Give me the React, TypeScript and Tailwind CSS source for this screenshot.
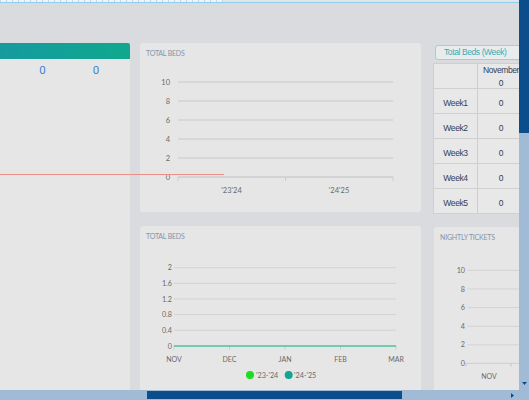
import React from "react";

const LABEL = "#6a6a6a";

function TopChart() {
  const grid = [39, 58, 77, 96, 115];
  const labels: [string, number][] = [["10", 39], ["8", 58], ["6", 77], ["4", 96], ["2", 115], ["0", 134]];
  return (
    <svg width={281} height={155} viewBox="0 14 281 155" className="block">
      {grid.map((y) => (
        <line key={y} x1={38} x2={253} y1={y} y2={y} stroke="#d2d2d2" strokeWidth={1.5} />
      ))}
      <line x1={38} x2={253} y1={134} y2={134} stroke="#cdcdcd" strokeWidth={1.5} />
      {[38, 145.5, 253].map((x) => (
        <line key={x} x1={x} x2={x} y1={134} y2={138} stroke="#cdcdcd" strokeWidth={1} />
      ))}
      {labels.map(([t, y]) => (
        <text key={t} x={30} y={y + 2.6} textAnchor="end" fontSize={7.5} fill={LABEL}>
          {t}
        </text>
      ))}
      <text x={91.5} y={150} textAnchor="middle" fontSize={7.5} fill={LABEL}>
        '23'24
      </text>
      <text x={199} y={150} textAnchor="middle" fontSize={7.5} fill={LABEL}>
        '24'25
      </text>
    </svg>
  );
}

function BottomChart() {
  const labels: [string, number][] = [["2", 41.7], ["1.6", 57.3], ["1.2", 73], ["0.8", 88.5], ["0.4", 104.2], ["0", 120]];
  const xs: [string, number][] = [["NOV", 34], ["DEC", 89.5], ["JAN", 145], ["FEB", 200.5], ["MAR", 256]];
  return (
    <svg width={281} height={156} viewBox="0 14 281 156" className="block">
      {labels.slice(0, 5).map(([t, y]) => (
        <line key={t} x1={34} x2={256} y1={y} y2={y} stroke="#d3d3d3" strokeWidth={1} />
      ))}
      {xs.map(([t, x]) => (
        <line key={t} x1={x} x2={x} y1={120} y2={124} stroke="#cdcdcd" strokeWidth={1} />
      ))}
      <line x1={34} x2={256} y1={120} y2={120} stroke="#47c2a2" strokeWidth={1.6} />
      {labels.map(([t, y]) => (
        <text key={t} x={32} y={y + 2.6} textAnchor="end" fontSize={7.2} fill={LABEL}>
          {t}
        </text>
      ))}
      {xs.map(([t, x]) => (
        <text key={t} x={x} y={135.5} textAnchor="middle" fontSize={7} fill={LABEL}>
          {t}
        </text>
      ))}
      <circle cx={110} cy={149} r={4} fill="#1edc1e" />
      <text x={116} y={151.6} fontSize={7.2} fill={LABEL}>
        '23-'24
      </text>
      <circle cx={148.7} cy={149} r={4} fill="#13a594" />
      <text x={154} y={151.6} fontSize={7.2} fill={LABEL}>
        '24-'25
      </text>
    </svg>
  );
}

function TicketsChart() {
  const labels: [string, number][] = [["10", 43.3], ["8", 62], ["6", 80.6], ["4", 99.3], ["2", 117.8], ["0", 136.3]];
  return (
    <svg width={100} height={156} viewBox="0 14 100 156" className="block">
      {labels.slice(0, 5).map(([t, y]) => (
        <line key={t} x1={33.5} x2={100} y1={y} y2={y} stroke="#d3d3d3" strokeWidth={1} />
      ))}
      <line x1={32} x2={100} y1={136.3} y2={136.3} stroke="#cdcdcd" strokeWidth={1} />
      {[32, 77].map((x) => (
        <line key={x} x1={x} x2={x} y1={136.3} y2={139.5} stroke="#c4c4c4" strokeWidth={1} />
      ))}
      {labels.map(([t, y]) => (
        <text key={t} x={31} y={y + 2.6} textAnchor="end" fontSize={7.2} fill={LABEL}>
          {t}
        </text>
      ))}
      <text x={55} y={151.5} textAnchor="middle" fontSize={7} fill={LABEL}>
        NOV
      </text>
    </svg>
  );
}

function Title({ children }: { children: React.ReactNode }) {
  return (
    <div className="h-[14px] pl-[6px] pt-[7px] text-[7px] leading-[7px] tracking-[-0.2px] text-[#8595a9] uppercase whitespace-nowrap">
      {children}
    </div>
  );
}

const weeks = ["Week1", "Week2", "Week3", "Week4", "Week5"];

export default function App() {
  return (
    <div className="w-[529px] h-[400px] flex flex-col bg-[#a1bbd7] overflow-hidden font-['Lato','Noto_Sans',sans-serif]">
      <div className="flex h-[390px] shrink-0">
        <div className="relative w-[519px] h-[390px] overflow-hidden bg-[#dadbde] shrink-0">
          <div className="flex h-[2px] bg-[#e0e5ea]">
            <div className="w-[223px] h-[2px] bg-[repeating-linear-gradient(90deg,#c8d5e0_0px,#c8d5e0_1px,#f1f4f7_1px,#f1f4f7_6px)]" />
          </div>
          <div className="h-px bg-[#8dcfee]" />

          <div className="flex items-start mt-[40px]">
            {/* left card */}
            <div className="w-[130px] h-[360px] shrink-0 bg-[#e6e6e6] rounded-tr-[2px]">
              <div className="h-[16px] bg-linear-to-r from-[#179a9f] to-[#0fa88d] rounded-tr-[2px]" />
              <div className="flex mt-[4px] text-[11.5px] leading-[14px] text-[#3f83d4] font-['Roboto',sans-serif]">
                <div className="w-[85px] text-center">0</div>
                <div className="w-[22px] text-center">0</div>
              </div>
            </div>

            {/* middle column */}
            <div className="ml-[10px] w-[281px] shrink-0 flex flex-col gap-[14px]">
              <div className="h-[169px] bg-[#e6e6e6] rounded-[3px]">
                <Title>Total Beds</Title>
                <TopChart />
              </div>
              <div className="h-[170px] bg-[#e6e6e6] rounded-[3px]">
                <Title>Total Beds</Title>
                <BottomChart />
              </div>
            </div>

            {/* right column */}
            <div className="ml-[12px] w-[100px] shrink-0 flex flex-col">
              <div className="ml-[2px] mt-[2px] h-[15px] w-[95px] border border-[#93d6d9] rounded-[3px] bg-[#e9ecec] pl-[8px] text-[8.5px] leading-[13px] tracking-[-0.4px] text-[#36adb5] whitespace-nowrap font-['Liberation_Sans',Arial,sans-serif]">
                Total Beds (Week)
              </div>
              <div className="mt-[3px] w-[92px] border-l border-t border-[#cfcfcf] bg-[#e8e8e8] text-[8.5px] tracking-[-0.4px] text-[#2f3e59] font-['Liberation_Sans',Arial,sans-serif]">
                <div className="flex h-[25px] border-b border-[#d0d0d0]">
                  <div className="w-[44px] border-r border-[#cdcdcd]" />
                  <div className="w-[47px] border-r border-[#cdcdcd] text-center leading-[13px]">
                    <div>November</div>
                    <div>0</div>
                  </div>
                </div>
                {weeks.map((w) => (
                  <div key={w} className="flex h-[25px] border-b border-[#d0d0d0]">
                    <div className="w-[44px] border-r border-[#cdcdcd] text-center pt-[8px] leading-[13px]">{w}</div>
                    <div className="w-[47px] border-r border-[#cdcdcd] text-center pt-[8px] leading-[13px]">0</div>
                  </div>
                ))}
              </div>
              <div className="mt-[13px] ml-[1px] h-[170px] w-[100px] bg-[#e6e6e6] rounded-[3px]">
                <Title>Nightly Tickets</Title>
                <TicketsChart />
              </div>
            </div>
          </div>

          {/* overflowing red line */}
          <div className="absolute left-0 top-[174px] w-[224px] h-px bg-[#ea8f89]" />
        </div>

        {/* vertical scrollbar */}
        <div className="w-[10px] h-[390px] flex flex-col shrink-0">
          <div className="h-[133px] bg-[#0c4e8c]" />
          <div className="flex-1 bg-[#a1bbd7] flex items-end justify-center pb-[5px]">
            <svg width={5} height={3} viewBox="0 0 5 3" className="block">
              <polygon points="0,0 5,0 2.5,3" fill="#0c4e8c" />
            </svg>
          </div>
        </div>
      </div>

      {/* horizontal scrollbar */}
      <div className="h-[10px] flex shrink-0">
        <div className="w-[519px] flex items-start">
          <div className="ml-[147px] mt-[1px] w-[255px] h-[8px] bg-[#0c4e8c]" />
          <div className="flex-1 h-[10px] flex items-center justify-end pr-[5px]">
            <svg width={3} height={5} viewBox="0 0 3 5" className="block">
              <polygon points="0,0 3,2.5 0,5" fill="#0c4e8c" />
            </svg>
          </div>
        </div>
      </div>
    </div>
  );
}
